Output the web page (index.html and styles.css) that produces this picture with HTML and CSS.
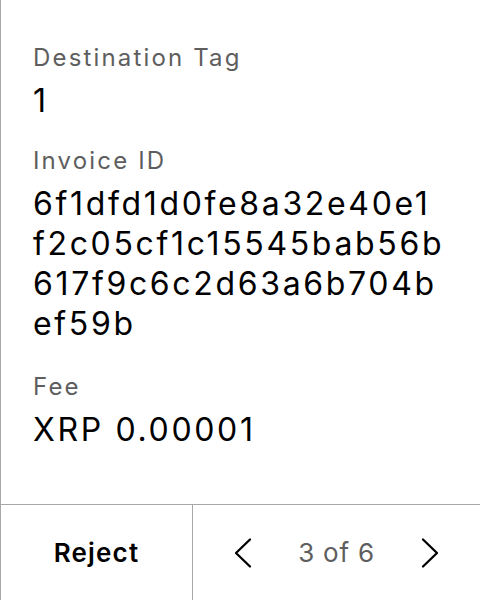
FILE: index.html
```html
<!DOCTYPE html>
<html>
<head>
<meta charset="utf-8">
<link rel="stylesheet" href="styles.css">
</head>
<body>
<div class="screen">
  <div class="details">
    <div class="field">
      <div class="label">Destination Tag</div>
      <div class="value">1</div>
    </div>
    <div class="field">
      <div class="label">Invoice ID</div>
      <div class="value">6f1dfd1d0fe8a32e40e1<br>f2c05cf1c15545bab56b<br>617f9c6c2d63a6b704b<br>ef59b</div>
    </div>
    <div class="field field-fee">
      <div class="label">Fee</div>
      <div class="value">XRP 0.00001</div>
    </div>
  </div>
  <div class="footer">
    <div class="reject">Reject</div>
    <div class="pager">
      <svg class="chev" width="18" height="32" viewBox="0 0 18 32"><path d="M16 2.5 L2 16 L16 29.5" fill="none" stroke="#000" stroke-width="2.3" stroke-linecap="round" stroke-linejoin="round"/></svg>
      <span class="count">3 of 6</span>
      <svg class="chev" width="18" height="32" viewBox="0 0 18 32"><path d="M2 2.5 L16 16 L2 29.5" fill="none" stroke="#000" stroke-width="2.3" stroke-linecap="round" stroke-linejoin="round"/></svg>
    </div>
  </div>
</div>
</body>
</html>
```
FILE: styles.css
```css
html, body {
  margin: 0;
  padding: 0;
  background: #fff;
}
.screen {
  width: 479px;
  height: 600px;
  border-left: 1px solid #a8a8a8;
  display: flex;
  flex-direction: column;
  font-family: Inter, "Liberation Sans", sans-serif;
}
.details {
  flex: 1;
  padding: 43px 0 0 32px;
  display: flex;
  flex-direction: column;
  gap: 25px;
}
.field {
  display: flex;
  flex-direction: column;
  gap: 8px;
}
.field-fee {
  margin-top: 3px;
}
.label {
  font-size: 24px;
  line-height: 30px;
  letter-spacing: 0.09em;
  color: #5e5e5e;
}
.value {
  font-size: 32px;
  line-height: 40px;
  letter-spacing: 0.083em;
  font-weight: 430;
  color: #000;
}
.footer {
  height: 95px;
  border-top: 1px solid #a8a8a8;
  display: flex;
}
.reject {
  width: 191px;
  border-right: 1px solid #a8a8a8;
  display: flex;
  align-items: center;
  justify-content: center;
  font-size: 26px;
  font-weight: 600;
  letter-spacing: 0.045em;
  color: #000;
}
.pager {
  flex: 1;
  display: flex;
  align-items: center;
  justify-content: center;
  gap: 46px;
}
.count {
  font-size: 26px;
  letter-spacing: 0.03em;
  color: #5e5e5e;
}
.chev {
  display: block;
}
```
